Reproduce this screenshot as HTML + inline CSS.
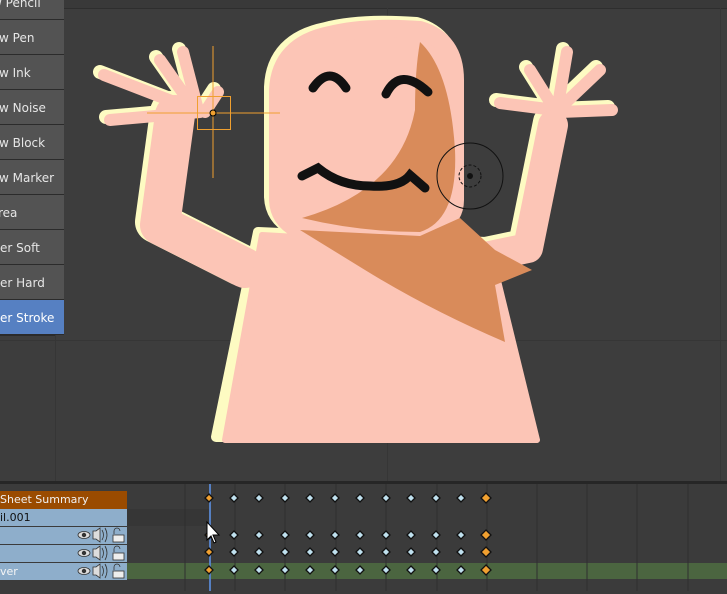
<!DOCTYPE html>
<html><head><style>
body{margin:0;width:727px;height:591px;overflow:hidden;background:#3d3d3d;font-family:"DejaVu Sans","Liberation Sans",sans-serif;position:relative}
.btn{position:absolute;left:0;width:64px;height:34px;background:#535353;border-bottom:1px solid #2b2b2b;color:#e6e6e6;font-size:12px;line-height:36px;white-space:nowrap;overflow:hidden}
.btn span{position:absolute;right:auto}
.row{position:absolute;left:0;width:127px;height:17px;font-size:11px;line-height:17px;white-space:nowrap;overflow:hidden}
</style></head><body>
<div style="position:absolute;left:0;top:0;width:727px;height:8px;background:#393939;border-bottom:1px solid #2e2e2e"></div>
<div style="position:absolute;left:55px;top:8px;width:1px;height:473px;background:#363636"></div>
<div style="position:absolute;left:387px;top:8px;width:1px;height:473px;background:#363636"></div>
<div style="position:absolute;left:720px;top:8px;width:1px;height:473px;background:#363636"></div>
<div style="position:absolute;left:0;top:340px;width:727px;height:1px;background:#363636"></div>

<div class="btn" style="top:-15px"><span style="left:-8px;top:0">w Pencil</span></div>
<div class="btn" style="top:20px"><span style="left:-1px">w Pen</span></div>
<div class="btn" style="top:55px"><span style="left:-1px">w Ink</span></div>
<div class="btn" style="top:90px"><span style="left:-1px">w Noise</span></div>
<div class="btn" style="top:125px"><span style="left:-1px">w Block</span></div>
<div class="btn" style="top:160px"><span style="left:-1px">w Marker</span></div>
<div class="btn" style="top:195px"><span style="left:-2px">rea</span></div>
<div class="btn" style="top:230px"><span style="left:0">er Soft</span></div>
<div class="btn" style="top:265px"><span style="left:0">er Hard</span></div>
<div class="btn" style="top:300px;background:#5680c2;color:#fff"><span style="left:0">er Stroke</span></div>
<div style="position:absolute;left:0;top:335px;width:55px;height:1px;background:#2b2b2b"></div>

<svg style="position:absolute;left:0;top:0" width="727" height="481">
<g stroke-linecap="round" stroke-linejoin="round" fill="none">
<g stroke="#fdfbc2" transform="translate(-4,-3)">
<path d="M200,112 L104,75 M200,112 L110,120 M195,110 L160,60 M198,110 L183,52 M205,112 L218,92" stroke-width="14"/>
<path d="M175,115 L160,225 L245,268" stroke-width="42"/>
<path d="M555,110 L500,103 M555,110 L530,70 M558,105 L567,52 M560,108 L600,70 M560,112 L612,110" stroke-width="14"/>
<path d="M553,125 L528,248 L480,258" stroke-width="32"/>
<path d="M330,35 Q365,26 420,30 Q455,40 455,80 L455,200 Q455,240 360,240 Q280,240 278,200 L278,90 Q280,45 330,35Z" fill="#fdfbc2" stroke-width="20"/>
<path d="M262,235 L490,245 L537,440 L220,440 Z" fill="#fdfbc2" stroke-width="10"/>
</g>
<g stroke="#fcc5b6">
<path d="M200,112 L104,75 M200,112 L110,120 M195,110 L160,60 M198,110 L183,52 M205,112 L218,92" stroke-width="12"/>
<path d="M175,115 L160,225 L245,268" stroke-width="40"/>
<path d="M555,110 L500,103 M555,110 L530,70 M558,105 L567,52 M560,108 L600,70 M560,112 L612,110" stroke-width="12"/>
<path d="M553,125 L528,248 L480,258" stroke-width="30"/>
<path d="M330,35 Q365,26 420,30 Q455,40 455,80 L455,200 Q455,240 360,240 Q280,240 278,200 L278,90 Q280,45 330,35Z" fill="#fcc5b6" stroke-width="18"/>
<path d="M262,235 L490,248 L537,440 L225,440 Z" fill="#fcc5b6" stroke-width="6"/>
</g>
</g>
<path d="M420,42 Q450,70 455,150 Q458,220 420,232 Q360,232 302,218 Q400,190 415,110 Q415,70 420,42Z" fill="#d98b5a"/>
<path d="M300,230 L420,236 L460,218 L495,250 L532,270 L495,285 L505,342 Q430,310 365,270 Z" fill="#d98b5a"/>
<g stroke="#111" stroke-width="9" fill="none" stroke-linecap="round">
<path d="M313,88 Q330,64 346,88"/>
<path d="M386,94 Q400,66 428,92"/>
<path d="M302,176 L318,168 Q340,186 370,186 Q400,188 410,175 L425,188"/>
</g>
<circle cx="470" cy="176" r="33" stroke="#111" fill="none"/>
<circle cx="470" cy="176" r="11" stroke="#111" fill="none" stroke-dasharray="3,2"/>
<circle cx="470" cy="176" r="3" fill="#111"/>
<g stroke="#f0a030" fill="none">
<line x1="213" y1="46" x2="213" y2="178"/>
<line x1="147" y1="113" x2="280" y2="113"/>
<rect x="197.5" y="96.5" width="33" height="33"/>
</g>
<circle cx="213" cy="113" r="3" fill="#f0a030" stroke="#000"/>
</svg>

<div style="position:absolute;left:0;top:481px;width:727px;height:110px;background:#3b3b3b;border-top:3px solid #262626"></div>
<div class="row" style="top:491px;background:#9a4b00;color:#f0f0f0;height:18px">Sheet Summary</div>
<div class="row" style="top:509px;background:#8eaecb;color:#111">il.001</div>
<div class="row" style="top:527px;background:#8eaecb"></div>
<div class="row" style="top:545px;background:#8eaecb"></div>
<div class="row" style="top:563px;background:#8eaecb;color:#f5f5f5">ver</div>
<div style="position:absolute;left:127px;top:563px;width:600px;height:16px;background:#4b6540"></div>
<div style="position:absolute;left:127px;top:509px;width:82px;height:17px;background:#363636"></div>
<svg style="position:absolute;left:0;top:484px" width="727" height="107">
<g stroke="#2f2f2f">
<line x1="185" y1="0" x2="185" y2="107"/><line x1="235" y1="0" x2="235" y2="107"/><line x1="285" y1="0" x2="285" y2="107"/><line x1="336" y1="0" x2="336" y2="107"/><line x1="386" y1="0" x2="386" y2="107"/><line x1="437" y1="0" x2="437" y2="107"/><line x1="487" y1="0" x2="487" y2="107"/><line x1="537" y1="0" x2="537" y2="107"/><line x1="587" y1="0" x2="587" y2="107"/><line x1="637" y1="0" x2="637" y2="107"/><line x1="688" y1="0" x2="688" y2="107"/>
</g>
<g fill="#ddd" stroke="#333" stroke-width="0.8">
<g id="ic"><ellipse cx="84" cy="51" rx="6" ry="3.5"/><circle cx="84" cy="51" r="1.8" fill="#333"/><path d="M93,47h3l4,-3v14l-4,-3h-3z"/><path d="M102,46q3,5 0,10M105,44q4,7 0,14" fill="none"/><path d="M114,50v-3a3,3 0 0 1 6,0" fill="none"/><rect x="113" y="51" width="11" height="7" fill="#eee"/></g>
<use href="#ic" y="18"/><use href="#ic" y="36"/>
</g>
<line x1="210" y1="0" x2="210" y2="107" stroke="#5680c2" stroke-width="2"/>
<g stroke="#111" stroke-width="1.3">
<g id="r1">
<path d="M209,10l4,4-4,4-4-4z" fill="#f0a030"/>
<path d="M234,10l4,4-4,4-4-4z" fill="#bfe0ee"/><path d="M259,10l4,4-4,4-4-4z" fill="#bfe0ee"/><path d="M285,10l4,4-4,4-4-4z" fill="#bfe0ee"/><path d="M310,10l4,4-4,4-4-4z" fill="#bfe0ee"/><path d="M335,10l4,4-4,4-4-4z" fill="#bfe0ee"/><path d="M360,10l4,4-4,4-4-4z" fill="#bfe0ee"/><path d="M386,10l4,4-4,4-4-4z" fill="#bfe0ee"/><path d="M411,10l4,4-4,4-4-4z" fill="#bfe0ee"/><path d="M436,10l4,4-4,4-4-4z" fill="#bfe0ee"/><path d="M461,10l4,4-4,4-4-4z" fill="#bfe0ee"/>
<path d="M486,9l5,5-5,5-5-5z" fill="#f0a030"/>
</g>
<use href="#r1" y="37"/><use href="#r1" y="54"/><use href="#r1" y="72"/>
</g>
<path d="M207,38 L207,56 L211,52 L214,59 L216,58 L213,51 L219,51 Z" fill="#fff" stroke="#000"/>
</svg>
</body></html>
